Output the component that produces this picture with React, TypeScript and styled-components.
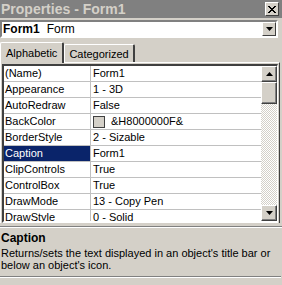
import React from 'react'
import styled, {createGlobalStyle} from 'styled-components'

const GlobalStyle = createGlobalStyle`
  html, body {
    margin: 0;
    padding: 0;
    background: #d4d0c8;
  }
`

const FONT = `"Liberation Sans", Arial, sans-serif`

interface Prop {
  name: string;
  value: string;
  swatch?: string;
}

const props: Prop[] = [
  {name: '(Name)', value: 'Form1'},
  {name: 'Appearance', value: '1 - 3D'},
  {name: 'AutoRedraw', value: 'False'},
  {name: 'BackColor', value: '&H8000000F&', swatch: '#d4d0c8'},
  {name: 'BorderStyle', value: '2 - Sizable'},
  {name: 'Caption', value: 'Form1'},
  {name: 'ClipControls', value: 'True'},
  {name: 'ControlBox', value: 'True'},
  {name: 'DrawMode', value: '13 - Copy Pen'},
  {name: 'DrawStyle', value: '0 - Solid'},
]

const Window = styled.div`
  width: 282px;
  height: 285px;
  overflow: hidden;
  background: #d4d0c8;
  display: flex;
  flex-direction: column;
  font-family: ${FONT};
  font-size: 11px;
  color: #000;
`

const TitleBar = styled.div`
  height: 18px;
  flex: none;
  background: #808080;
  color: #d4d0c8;
  font-weight: bold;
  font-size: 14px;
  display: flex;
  align-items: center;
  justify-content: space-between;
  padding: 0 3px 0 1px;
`

const CloseButton = styled.div`
  width: 12px;
  height: 12px;
  background: #d4d0c8;
  border-top: 1px solid #fff;
  border-left: 1px solid #fff;
  border-right: 1px solid #404040;
  border-bottom: 1px solid #404040;
  display: flex;
  align-items: center;
  justify-content: center;
`

const Combo = styled.div`
  height: 14px;
  margin: 2px 4px 0 0;
  background: #fff;
  border-top: 2px solid #808080;
  border-left: 2px solid #808080;
  border-right: 2px solid #fff;
  border-bottom: 2px solid #fff;
  display: flex;
  align-items: center;
  padding-left: 1px;
`

const ComboText = styled.div`
  flex: 1;
  font-size: 12px;
  b {
    margin-right: 7px;
  }
`

const DropButton = styled.div`
  width: 14px;
  height: 14px;
  background: #d4d0c8;
  box-sizing: border-box;
  border-top: 1px solid #fff;
  border-left: 1px solid #fff;
  border-right: 1px solid #404040;
  border-bottom: 1px solid #404040;
  display: flex;
  align-items: center;
  justify-content: center;
`

const TabRow = styled.div`
  display: flex;
  align-items: flex-end;
  height: 21px;
  margin-top: 3px;
  flex: none;
`

const Tab = styled.div<{$active?: boolean}>`
  height: ${p => (p.$active ? 21 : 18)}px;
  box-sizing: border-box;
  padding: 0 ${p => (p.$active ? 5 : 4)}px 0 ${p => (p.$active ? 5 : 4)}px;
  border-top: 1px solid #fff;
  border-left: 1px solid #fff;
  border-right: 2px solid #404040;
  border-radius: 2px 2px 0 0;
  font-size: 11px;
  display: flex;
  align-items: center;
  margin-bottom: ${p => (p.$active ? -1 : 0)}px;
  background: #d4d0c8;
  position: relative;
  z-index: ${p => (p.$active ? 1 : 0)};
`

const Panel = styled.div`
  flex: none;
  border-top: 1px solid #fff;
  border-left: 1px solid #fff;
  border-right: 1px solid #404040;
  margin-right: 2px;
  padding: 1px 0 0 1px;
`

const GridFrame = styled.div`
  height: 155px;
  border-top: 2px solid #404040;
  border-left: 2px solid #404040;
  border-right: 1px solid #fff;
  border-bottom: 2px solid #fff;
  display: flex;
  overflow: hidden;
  margin-right: 1px;
`

const Rows = styled.div`
  flex: 1;
  background: #fff;
  overflow: hidden;
`

const Row = styled.div`
  display: grid;
  grid-template-columns: 87px 1fr;
  height: 16px;
  box-sizing: border-box;
  border-bottom: 1px solid #c0c0c0;
  font-size: 11px;
  line-height: 15px;
`

const NameCell = styled.div<{$selected?: boolean}>`
  padding-left: 1px;
  border-right: 1px solid #c0c0c0;
  background: ${p => (p.$selected ? '#0a246a' : '#fff')};
  color: ${p => (p.$selected ? '#fff' : '#000')};
  white-space: nowrap;
  overflow: hidden;
`

const ValueCell = styled.div`
  padding-left: 2px;
  white-space: nowrap;
  overflow: hidden;
  display: flex;
  align-items: center;
`

const Swatch = styled.span<{$color: string}>`
  width: 10px;
  height: 10px;
  background: ${p => p.$color};
  border: 1px solid #404040;
  margin-right: 6px;
  flex: none;
`

const ScrollBar = styled.div`
  width: 16px;
  display: flex;
  flex-direction: column;
  background: repeating-conic-gradient(#d4d0c8 0 25%, #fff 0 50%) 0 0 / 2px 2px;
`

const ScrollButton = styled.div<{$h?: number}>`
  height: ${p => p.$h ?? 16}px;
  flex: none;
  box-sizing: border-box;
  background: #d4d0c8;
  border-top: 1px solid #fff;
  border-left: 1px solid #fff;
  border-right: 1px solid #404040;
  border-bottom: 1px solid #404040;
  box-shadow: inset -1px -1px 0 #808080;
  display: flex;
  align-items: center;
  justify-content: center;
`

const Spacer = styled.div`
  flex: 1;
`

const Description = styled.div`
  flex: 1;
  margin-top: 3px;
  border-top: 1px solid #808080;
  box-shadow: inset 0 1px 0 #fff;
  padding: 5px 1px 0;
  font-size: 11px;
  line-height: 12px;
  white-space: nowrap;
`

const DescTitle = styled.div`
  font-weight: bold;
  font-size: 12px;
  margin-bottom: 3px;
`

const DescFooter = styled.div`
  margin-top: 5px;
  margin-left: -1px;
  border-top: 1px solid #808080;
  box-shadow: inset 0 1px 0 #fff;
  height: 4px;
`

const Arrow = ({down}: {down?: boolean}) => (
  <svg width="7" height="4" viewBox="0 0 7 4">
    <path d={down ? 'M0 0H7L3.5 4Z' : 'M0 4H7L3.5 0Z'} fill="#000"/>
  </svg>
)

export default function App() {
  return (
    <>
      <GlobalStyle/>
      <Window>
        <TitleBar>
          <span>Properties - Form1</span>
          <CloseButton>
            <svg width="8" height="7" viewBox="0 0 8 7">
              <path d="M0 0L7 7M1 0L8 7M7 0L0 7M8 0L1 7" stroke="#000" strokeWidth="1"/>
            </svg>
          </CloseButton>
        </TitleBar>
        <Combo>
          <ComboText><b>Form1</b>Form</ComboText>
          <DropButton><Arrow down/></DropButton>
        </Combo>
        <TabRow>
          <Tab $active>Alphabetic</Tab>
          <Tab>Categorized</Tab>
        </TabRow>
        <Panel>
          <GridFrame>
            <Rows>
              {props.map(p => (
                <Row key={p.name}>
                  <NameCell $selected={p.name === 'Caption'}>{p.name}</NameCell>
                  <ValueCell>
                    {p.swatch && <Swatch $color={p.swatch}/>}
                    {p.value}
                  </ValueCell>
                </Row>
              ))}
            </Rows>
            <ScrollBar>
              <ScrollButton><Arrow/></ScrollButton>
              <ScrollButton $h={22}/>
              <Spacer/>
              <ScrollButton><Arrow down/></ScrollButton>
            </ScrollBar>
          </GridFrame>
        </Panel>
        <Description>
          <DescTitle>Caption</DescTitle>
          <div>Returns/sets the text displayed in an object's title bar or</div>
          <div>below an object's icon.</div>
          <DescFooter/>
        </Description>
      </Window>
    </>
  )
}
